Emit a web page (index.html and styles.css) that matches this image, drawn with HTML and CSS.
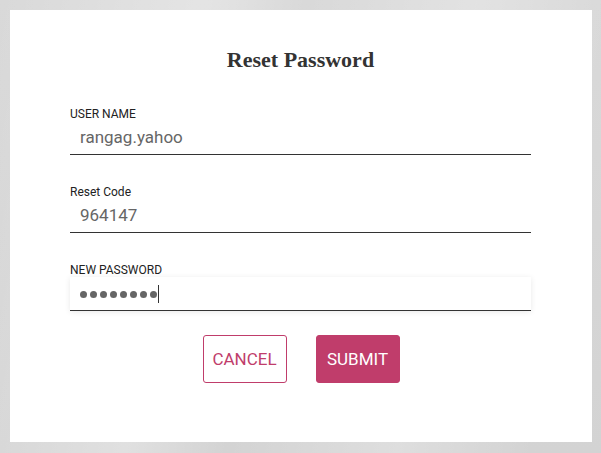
FILE: index.html
```html
<!DOCTYPE html>
<html>
<head>
<meta charset="utf-8">
<link rel="stylesheet" href="styles.css">
</head>
<body>
<div class="card">
  <h1 class="title">Reset Password</h1>
  <div class="field">
    <label class="label">USER NAME</label>
    <div class="input">rangag.yahoo</div>
  </div>
  <div class="field">
    <label class="label">Reset Code</label>
    <div class="input">964147</div>
  </div>
  <div class="field">
    <label class="label">NEW PASSWORD</label>
    <div class="input focused">
      <span class="dot"></span><span class="dot"></span><span class="dot"></span><span class="dot"></span><span class="dot"></span><span class="dot"></span><span class="dot"></span><span class="dot"></span><span class="caret"></span>
    </div>
  </div>
  <div class="actions">
    <button class="btn btn-outline">CANCEL</button>
    <button class="btn btn-fill">SUBMIT</button>
  </div>
</div>
</body>
</html>
```
FILE: styles.css
```css
html, body {
  margin: 0;
  height: 100%;
}
body {
  padding: 10px 9px 11px 10px;
  box-sizing: border-box;
  background:
    linear-gradient(100deg, rgba(255,255,255,0) 0%, rgba(255,255,255,0.3) 30%, rgba(255,255,255,0) 45%, rgba(255,255,255,0.25) 70%, rgba(255,255,255,0) 90%),
    linear-gradient(to bottom, #d9d9d9, #d3d3d3);
  font-family: Roboto, "Liberation Sans", sans-serif;
}
.card {
  background: #fff;
  height: 432px;
  box-sizing: border-box;
  padding: 37px 61px 0 60px;
}
.title {
  margin: 0 0 34px;
  text-align: center;
  font-family: "Liberation Serif", "Times New Roman", serif;
  font-weight: bold;
  font-size: 22px;
  line-height: 26px;
  color: #333;
}
.field {
  display: flex;
  flex-direction: column;
  margin-bottom: 30px;
}
.label {
  display: block;
  font-size: 12px;
  line-height: 14px;
  color: #222;
}
.input {
  height: 33px;
  border-bottom: 1px solid #333;
  box-sizing: content-box;
  padding-left: 10px;
  font-size: 17px;
  line-height: 33px;
  color: #666;
  display: flex;
  align-items: center;
}
.input.focused {
  box-shadow: 0 1px 6px rgba(0,0,0,0.09);
}
.dot {
  width: 7px;
  height: 7px;
  border-radius: 50%;
  background: #666;
  margin-right: 3px;
  margin-top: 1px;
}
.caret {
  width: 1px;
  height: 18px;
  background: #333;
  margin-left: -2px;
  margin-top: 1px;
}
.actions {
  display: flex;
  justify-content: center;
  gap: 29px;
  margin-top: -6px;
  padding-left: 1px;
}
.btn {
  height: 48px;
  width: 84px;
  padding: 0;
  border-radius: 3px;
  font-family: Roboto, "Liberation Sans", sans-serif;
  font-size: 17px;
  border: 1px solid #c03d6b;
  cursor: pointer;
}
.btn-outline {
  background: #fff;
  color: #c03d6b;
}
.btn-fill {
  background: #c03d6b;
  color: #fff;
}
```
